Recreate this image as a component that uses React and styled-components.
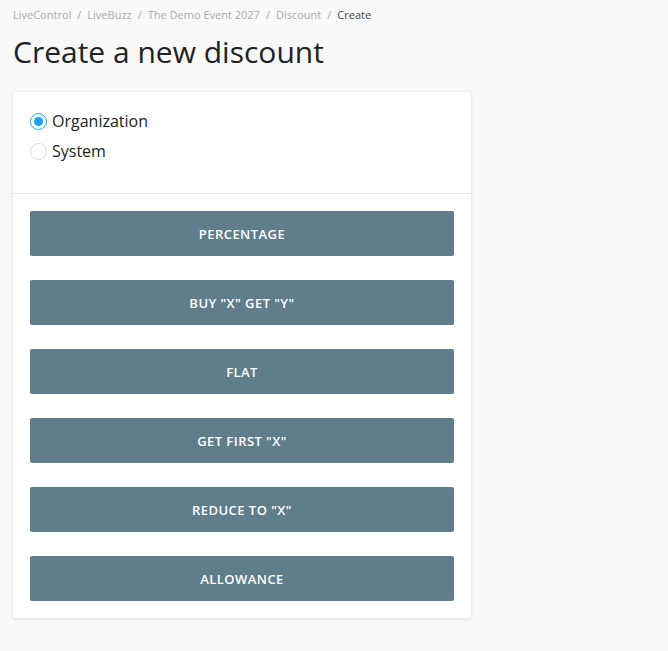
import React, { useState } from "react";
import styled, { createGlobalStyle } from "styled-components";

const Global = createGlobalStyle`
  html, body {
    margin: 0;
    padding: 0;
    background: #f9f9f9;
    font-family: "Open Sans", "Liberation Sans", sans-serif;
    color: #222;
  }
`;

const Page = styled.div`
  padding: 7px 13px 30px;
`;

const Crumbs = styled.nav`
  display: flex;
  align-items: center;
  gap: 6px;
  font-size: 11px;
  line-height: 16px;
  color: #a9a9a9;
`;

const Crumb = styled.span`
  color: ${p => (p.current ? "#3d4449" : "#a9a9a9")};
`;

const Title = styled.h1`
  margin: 10px 0 21px;
  font-size: 30px;
  font-weight: 400;
  line-height: 38px;
  color: #222;
`;

const Card = styled.div`
  width: 458px;
  background: #fff;
  border-radius: 3px;
  box-shadow: 0 1px 4px rgba(0, 0, 0, 0.12);
`;

const Scopes = styled.div`
  display: flex;
  flex-direction: column;
  gap: 8px;
  padding: 18px 17px 31px;
  border-bottom: 1px solid #e6e6e6;
`;

const RadioRow = styled.label`
  display: flex;
  align-items: center;
  gap: 5px;
  font-size: 16px;
  line-height: 22px;
  color: #222;
  cursor: pointer;
`;

const Dot = styled.span`
  box-sizing: border-box;
  width: 17px;
  height: 17px;
  border-radius: 50%;
  border: 1.5px solid ${p => (p.checked ? "#16a3ef" : "#d3dae2")};
  display: flex;
  align-items: center;
  justify-content: center;
  &::after {
    content: "";
    width: 9px;
    height: 9px;
    border-radius: 50%;
    background: ${p => (p.checked ? "#16a3ef" : "transparent")};
  }
`;

const Types = styled.div`
  display: flex;
  flex-direction: column;
  gap: 24px;
  padding: 17px 17px 17px;
`;

const TypeButton = styled.button`
  height: 45px;
  border: none;
  border-radius: 2px;
  background: #607d8b;
  color: #fff;
  font-family: inherit;
  font-size: 13px;
  font-weight: 600;
  letter-spacing: 0.45px;
  text-transform: uppercase;
  cursor: pointer;
`;

const types = [
  "Percentage",
  'Buy "X" get "Y"',
  "Flat",
  'Get first "X"',
  'Reduce to "X"',
  "Allowance"
];

const crumbs = ["LiveControl", "LiveBuzz", "The Demo Event 2027", "Discount"];

export default function App() {
  const [scope, setScope] = useState("organization");

  return (
    <Page>
      <Global />
      <Crumbs>
        {crumbs.map(c => (
          <React.Fragment key={c}>
            <Crumb>{c}</Crumb>
            <span>/</span>
          </React.Fragment>
        ))}
        <Crumb current>Create</Crumb>
      </Crumbs>
      <Title>Create a new discount</Title>
      <Card>
        <Scopes>
          <RadioRow onClick={() => setScope("organization")}>
            <Dot checked={scope === "organization"} />
            Organization
          </RadioRow>
          <RadioRow onClick={() => setScope("system")}>
            <Dot checked={scope === "system"} />
            System
          </RadioRow>
        </Scopes>
        <Types>
          {types.map(t => (
            <TypeButton key={t}>{t}</TypeButton>
          ))}
        </Types>
      </Card>
    </Page>
  );
}
